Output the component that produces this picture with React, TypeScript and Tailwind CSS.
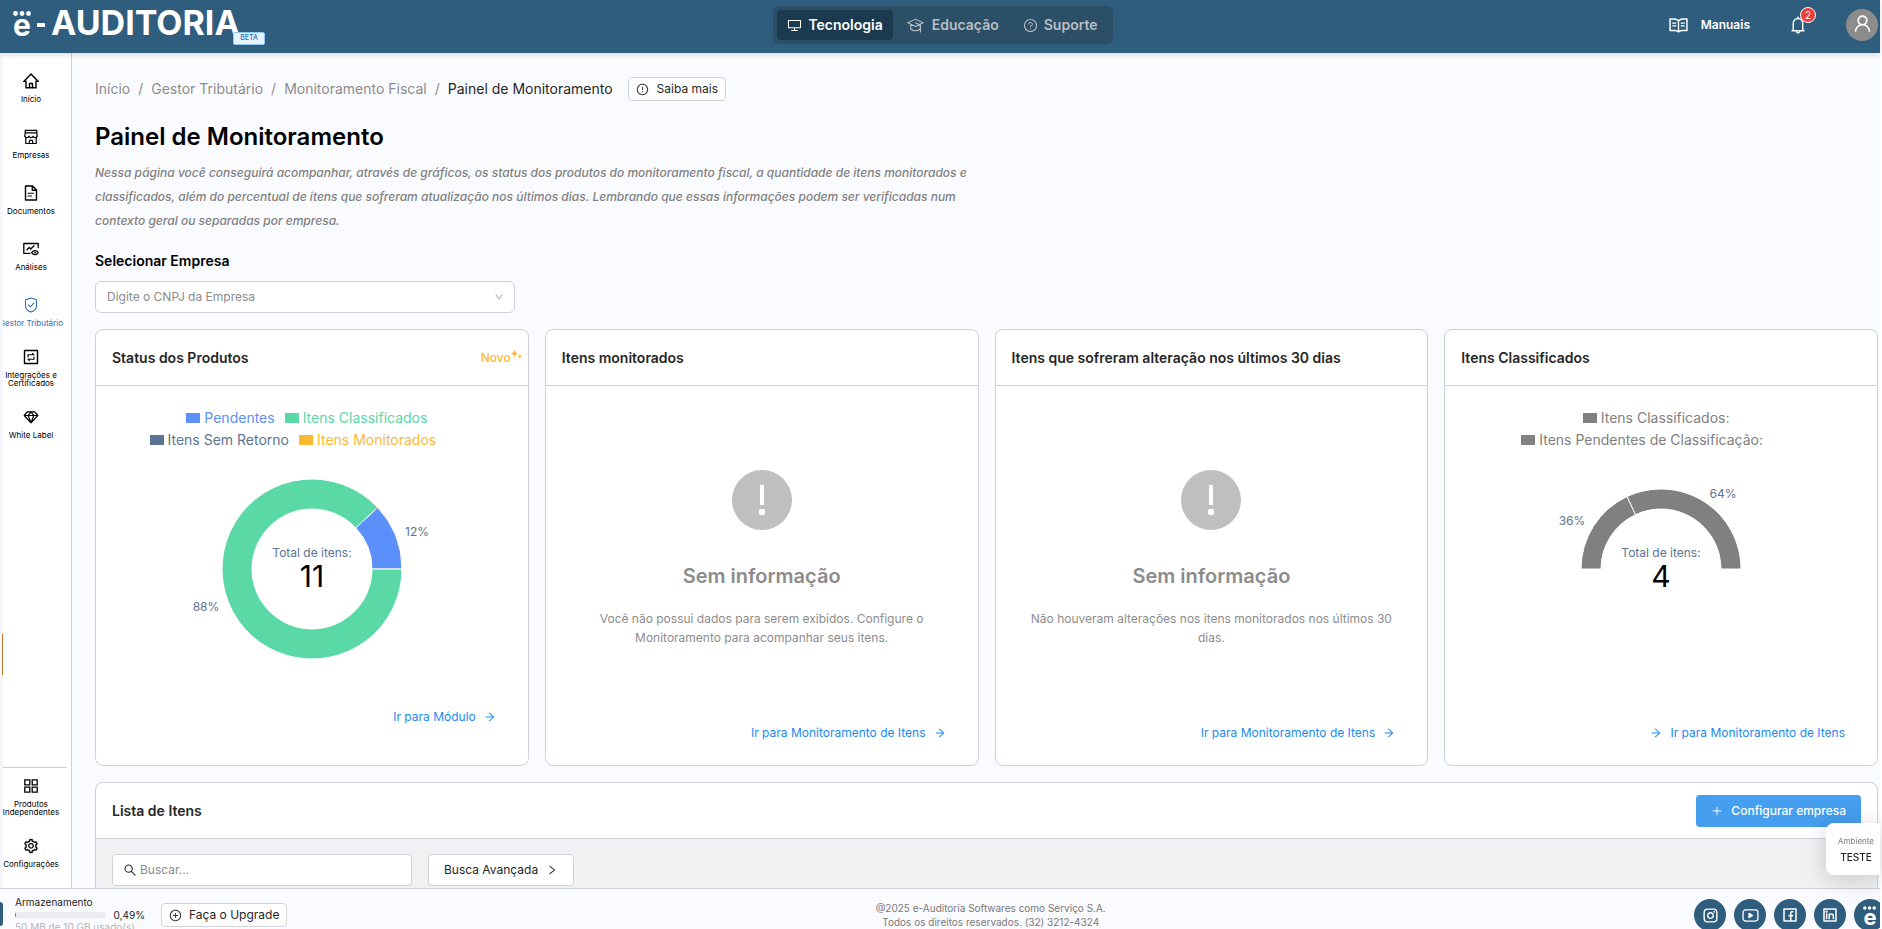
import type { ReactNode } from "react";
import {
  AiOutlineArrowRight,
  AiOutlineBell,
  AiOutlineDesktop,
  AiOutlineDown,
  AiOutlineExclamationCircle,
  AiOutlinePlus,
  AiOutlinePlusCircle,
  AiOutlineQuestionCircle,
  AiOutlineRead,
  AiOutlineRight,
  AiOutlineSetting,
  AiOutlineUser,
} from "react-icons/ai";
import { RiFacebookBoxLine, RiInstagramLine, RiLinkedinBoxLine } from "react-icons/ri";

/* ---------- icons ---------- */

function Stroke({ children, size = 16, width = 1.4 }: { children: ReactNode; size?: number; width?: number }) {
  return (
    <svg
      width={size}
      height={size}
      viewBox="0 0 16 16"
      fill="none"
      stroke="currentColor"
      strokeWidth={width}
      strokeLinejoin="round"
      strokeLinecap="round"
      aria-hidden="true"
    >
      {children}
    </svg>
  );
}

const HomeIcon = () => (
  <Stroke>
    <path d="M.8 8.4L8 1l7.2 7.4H13v6.400H3V8.400z" strokeLinejoin="miter" />
    <path d="M6.500 14.500v-4h3v4" />
  </Stroke>
);

const StoreIcon = () => (
  <Stroke width={1.2}>
    <path d="M2.200 1.400h11.600v2.400H2.200zM2.200 3.800L1.800 7.200M13.800 3.800l.4 3.400M2.800 8.500v6h10.400v-6" />
    <path d="M1.800 7.200c.6 2 3.600 2 4.100 0 .6 2 3.600 2 4.200 0 .5 2 3.500 2 4.100 0M6.300 14.500v-2.300c0-1.500 3.400-1.500 3.400 0v2.300" />
  </Stroke>
);

const DocumentIcon = () => (
  <Stroke>
    <path d="M2.500 1h7l4 4v10h-11zM9.300 1v4.200h4.200" />
    <path d="M5 8.300h5.500M5 11h3.500" strokeWidth="1.100" />
  </Stroke>
);

const AnalysisIcon = () => (
  <Stroke width={1.3}>
    <path d="M7 12.300H.8V2.500h14.400v4.200M4 8.800l2.200-2.300 1.500 1.500 3.300-3.300" />
    <path d="M8.600 11.600c1.700-2.700 5-2.700 6.700 0-1.700 2.700-5 2.700-6.700 0z" strokeWidth="1.100" />
    <circle cx="12" cy="11.600" r=".6" strokeWidth=".9" />
  </Stroke>
);

const ShieldIcon = () => (
  <Stroke width={1.1}>
    <path d="M8 1l5.500 1.800v6.100c0 3.200-2.600 5-5.500 6.200-2.900-1.200-5.500-3-5.500-6.200V2.800z" />
    <path d="M5.300 7.800l2 2 3.600-3.600" />
  </Stroke>
);

const IntegrationIcon = () => (
  <Stroke>
    <path d="M1.500 1.500h13v13h-13z" />
    <path d="M5 8V5.800h5.800M9.600 4.500l1.300 1.300M11 8v2.200H5.200M6.400 11.500l-1.300-1.300" strokeWidth="1.100" />
  </Stroke>
);

const DiamondIcon = () => (
  <Stroke width={1.2}>
    <path d="M4.200 2.800h7.600l3 3.700L8 13.800 1.200 6.500zM1.200 6.500h13.600M5.200 6.500L8 13.800l2.800-7.300L8 2.800z" />
  </Stroke>
);

const GridIcon = () => (
  <Stroke width={1.3}>
    <path d="M1.800 1.800h5v5h-5zM9.200 1.800h5v5h-5zM1.800 9.200h5v5h-5zM9.200 9.200h5v5h-5z" strokeLinejoin="miter" />
  </Stroke>
);

const GraduationIcon = () => (
  <Stroke size={17} width={1}>
    <path d="M8 2L.8 5.500 8 9l7.200-3.500zM3.500 7v4.300c2.500 2.300 6.500 2.300 9 0V7" />
    <path d="M8 5.500l4.700 2.200v6.500" />
  </Stroke>
);

const SearchIcon = () => (
  <Stroke size={12} width={1.500}>
    <circle cx="6.200" cy="6.200" r="4.800" />
    <path d="M9.800 9.800l5 5" />
  </Stroke>
);

const YoutubeIcon = () => (
  <Stroke size={17} width={1.200}>
    <rect x="1" y="2.800" width="14" height="10.400" rx="2.500" />
    <path d="M6.600 6l3.400 2-3.400 2z" fill="currentColor" />
  </Stroke>
);

const SparkIcon = () => (
  <svg width="11" height="10" viewBox="0 0 11 10" fill="currentColor" aria-hidden="true">
    <path d="M3.500 0l1.200 2.300 2.300 1.200-2.300 1.200L3.500 7 2.300 4.700 0 3.500l2.300-1.200zM8.800 4.200l.8 1.300 1.300.8-1.300.8-.8 1.300-.8-1.300-1.300-.8 1.300-.8z" />
  </svg>
);

/* The brand's "e" with three dots above it. */
function BrandE({ small = false }: { small?: boolean }) {
  return (
    <span className="flex flex-col items-center">
      <svg width={small ? 13 : 18} height={small ? 4 : 5} viewBox="0 0 18 5" fill="currentColor" aria-hidden="true">
        <circle cx="2.500" cy="2.500" r="2.400" />
        <circle cx="9" cy="2.500" r="2.400" />
        <circle cx="15.500" cy="2.500" r="2.400" />
      </svg>
      <span className={small ? "text-[22px] leading-[15px] font-bold" : "text-[30px] leading-[18px] font-bold"}>e</span>
    </span>
  );
}

/* ---------- sidebar ---------- */

function SideItem({ icon, label, active = false }: { icon: ReactNode; label: string; active?: boolean }) {
  return (
    <a
      href="#"
      className={
        active
          ? "flex w-[68px] flex-col items-center gap-1.5 text-center text-[8px] leading-2 text-[#2f6cb8]"
          : "flex w-[68px] flex-col items-center gap-1.5 text-center text-[8px] leading-2 text-black"
      }
    >
      {icon}
      <span>{label}</span>
    </a>
  );
}

function Sidebar() {
  return (
    <aside className="relative flex w-[72px] shrink-0 border-r border-[#cdd1d8] bg-white">
      <div className="w-[3px] shrink-0 bg-[#f5f6fb]" />
      <span className="absolute top-[581px] left-0.5 h-[41px] w-px bg-[#c47a2c]" />
      <nav className="flex min-w-0 flex-1 flex-col justify-between overflow-hidden">
        <div className="-ml-1.5 flex flex-col pt-5">
          <div className="flex flex-col gap-[26px]">
            <SideItem icon={<HomeIcon />} label="Início" />
            <SideItem icon={<StoreIcon />} label="Empresas" />
            <SideItem icon={<DocumentIcon />} label="Documentos" />
            <SideItem icon={<AnalysisIcon />} label="Análises" />
            <SideItem icon={<ShieldIcon />} label="Gestor Tributário" active />
          </div>
          <div className="flex flex-col gap-[22px] pt-[22px]">
            <SideItem icon={<IntegrationIcon />} label="Integrações e Certificados" />
            <SideItem icon={<DiamondIcon />} label="White Label" />
          </div>
        </div>
        <div className="mr-1 border-t border-[#cdd1d8] pt-[10px] pb-5">
          <div className="-ml-1.5 flex flex-col gap-[22px]">
            <SideItem icon={<GridIcon />} label="Produtos Independentes" />
            <SideItem icon={<AiOutlineSetting size={16} strokeWidth={20} />} label="Configurações" />
          </div>
        </div>
      </nav>
    </aside>
  );
}

/* ---------- cards ---------- */

function Card({ title, extra, children }: { title: string; extra?: ReactNode; children: ReactNode }) {
  return (
    <section className="flex min-w-0 flex-col rounded-lg border border-[#cdd1d8] bg-white">
      <header className="flex h-14 items-center justify-between border-b border-[#cdd1d8] pr-1.5 pl-4">
        <h2 className="text-sm font-semibold text-[#262626]">{title}</h2>
        {extra}
      </header>
      {children}
    </section>
  );
}

function CardLink({ children, arrowFirst = false }: { children: string; arrowFirst?: boolean }) {
  return (
    <a
      href="#"
      className={
        arrowFirst
          ? "flex flex-row-reverse items-center gap-2 self-end text-xs text-[#1e88f0]"
          : "flex items-center gap-2 self-end text-xs text-[#1e88f0]"
      }
    >
      <span>{children}</span>
      <AiOutlineArrowRight size={12} />
    </a>
  );
}

function EmptyCard({ title, text }: { title: string; text: string }) {
  return (
    <Card title={title}>
      <div className="flex flex-1 flex-col items-center px-8 pt-[84px] pb-6">
        <svg width="60" height="60" viewBox="0 0 60 60" aria-hidden="true">
          <circle cx="30" cy="30" r="30" fill="#bfbfbf" />
          <rect x="28" y="15" width="4" height="20" fill="#fff" />
          <circle cx="30" cy="42" r="3.200" fill="#fff" />
        </svg>
        <h3 className="mt-8 text-xl leading-7 font-semibold text-[#8c8c8c]">Sem informação</h3>
        <p className="mt-[19px] text-center text-xs leading-[19px] text-[#8c8c8c]">{text}</p>
        <div className="mt-auto flex self-stretch justify-end">
          <CardLink>Ir para Monitoramento de Itens</CardLink>
        </div>
      </div>
    </Card>
  );
}

function LegendItem({ swatch, text, label }: { swatch: string; text: string; label: string }) {
  return (
    <span className="mr-2.5 flex items-center gap-1">
      <span className={`h-2.5 w-3.5 ${swatch}`} />
      <span className={text}>{label}</span>
    </span>
  );
}

function ring(cx: number, cy: number, outer: number, inner: number, from: number, to: number) {
  const at = (r: number, deg: number) => {
    const a = (deg * Math.PI) / 180;
    return `${cx + r * Math.cos(a)} ${cy - r * Math.sin(a)}`;
  };
  const large = to - from > 180 ? 1 : 0;
  return `M${at(outer, from)}A${outer} ${outer} 0 ${large} 0 ${at(outer, to)}L${at(inner, to)}A${inner} ${inner} 0 ${large} 1 ${at(inner, from)}Z`;
}

function ChartTotal({ value }: { value: string }) {
  return (
    <>
      <text x="150" y="79" textAnchor="middle" className="fill-[#5b7491] text-xs">
        Total de itens:
      </text>
      <text x="150" y="109" textAnchor="middle" className="fill-black text-[30px]">
        {value}
      </text>
    </>
  );
}

function StatusChart() {
  return (
    <svg className="mt-[27px] self-center" width="300" height="182" viewBox="0 0 300 182" role="img" aria-label="Status dos Produtos">
      <path d={ring(150, 91, 90, 60, 0, 43.200)} fill="#5b8ff9" stroke="#fff" />
      <path d={ring(150, 91, 90, 60, 43.200, 360)} fill="#5ad8a6" stroke="#fff" />
      <text x="255" y="58" textAnchor="middle" className="fill-[#5b7491] text-xs">
        12%
      </text>
      <text x="44" y="133" textAnchor="middle" className="fill-[#5b7491] text-xs">
        88%
      </text>
      <ChartTotal value="11" />
    </svg>
  );
}

function ClassifiedChart() {
  return (
    <svg className="mt-[27px] self-center" width="300" height="182" viewBox="0 0 300 182" role="img" aria-label="Itens Classificados">
      <path d={ring(150, 91, 80, 60, 0, 115.200)} fill="#808080" stroke="#fff" />
      <path d={ring(150, 91, 80, 60, 115.200, 180)} fill="#808080" stroke="#fff" />
      <text x="212" y="20" textAnchor="middle" className="fill-[#5b7491] text-xs">
        64%
      </text>
      <text x="61" y="47" textAnchor="middle" className="fill-[#5b7491] text-xs">
        36%
      </text>
      <ChartTotal value="4" />
    </svg>
  );
}

/* ---------- page ---------- */

function TopBar() {
  return (
    <header className="relative z-10 grid h-[53px] shrink-0 grid-cols-[1fr_auto_1fr] items-start bg-[#2f5d7e] pl-1.5 text-white shadow-[0_2px_6px_rgba(0,0,0,0.14)]">
      <a href="#" aria-label="e-Auditoria" className="relative flex h-[53px] w-[259px] items-start gap-1.5 pt-[11px] pl-[7px]">
        <BrandE />
        <span className="mt-3 h-1 w-2 bg-white" />
        <span className="text-[34px] leading-6 font-bold">AUDITORIA</span>
        <span className="absolute top-8 right-0 flex h-[13px] w-8 items-center justify-center rounded-[2px] border border-[#91c8f5] bg-[#e6f4ff] text-[7px] font-medium text-[#1f6fc0]">
          BETA
        </span>
      </a>
      <nav className="mt-1.5 flex h-[38px] items-center rounded-md bg-[#2c4f68] p-1 pr-[15px] text-sm font-semibold text-[#b9bdc2]">
        <a href="#" className="flex h-[30px] items-center gap-1.5 rounded bg-[#1b3a4f] px-[10px] text-white">
          <AiOutlineDesktop size={15} />
          Tecnologia
        </a>
        <a href="#" className="ml-3.5 flex items-center gap-2">
          <GraduationIcon />
          Educação
        </a>
        <a href="#" className="ml-6 flex items-center gap-1.5">
          <AiOutlineQuestionCircle size={15} />
          Suporte
        </a>
      </nav>
      <div className="flex h-[50px] items-center justify-end pr-0.5">
        <a href="#" className="mr-[38px] flex items-center gap-3 text-xs font-semibold">
          <AiOutlineRead size={21} />
          Manuais
        </a>
        <button type="button" aria-label="Notificações" className="relative mr-[38px]">
          <AiOutlineBell size={20} />
          <span className="absolute -top-2 -right-2 flex size-4 items-center justify-center rounded-full border border-white bg-[#ee3b3b] text-[10px]">
            2
          </span>
        </button>
        <button type="button" aria-label="Perfil" className="flex size-8 items-center justify-center rounded-full bg-[#8c8c8c]">
          <AiOutlineUser size={21} className="mb-1" />
        </button>
      </div>
    </header>
  );
}

function Breadcrumb() {
  return (
    <div className="flex items-center gap-[15px]">
      <nav aria-label="Breadcrumb" className="flex gap-2 text-sm text-[#8c8c8c]">
        <a href="#">Início</a>
        <span>/</span>
        <a href="#">Gestor Tributário</a>
        <span>/</span>
        <a href="#">Monitoramento Fiscal</a>
        <span>/</span>
        <span className="text-[#262626]">Painel de Monitoramento</span>
      </nav>
      <button type="button" className="flex h-6 items-center gap-2 rounded border border-[#d0d4da] bg-white px-[7px] text-xs text-[#262626]">
        <AiOutlineExclamationCircle size={13} />
        Saiba mais
      </button>
    </div>
  );
}

function Footer() {
  return (
    <footer className="relative flex h-[41px] shrink-0 items-start justify-between overflow-hidden border-t border-[#cdd1d8] bg-[#fafbff]">
      <span className="absolute top-[13px] left-0 h-6 w-[3px] rounded-r bg-[#2f5d7e]" />
      <div className="flex pl-[15px]">
        <div className="w-[130px] pt-1.5 text-[10px] text-[#262626]">
          <p className="leading-[14px]">Armazenamento</p>
          <div className="flex items-center gap-2 leading-3">
            <div className="h-1.5 flex-1 overflow-hidden rounded-full bg-[#ebedf0]">
              <div className="h-full w-px bg-[#1e88f0]" />
            </div>
            <span>0,49%</span>
          </div>
          <p className="leading-3 text-[#b5b5b5]">50 MB de 10 GB usado(s)</p>
        </div>
        <button type="button" className="mt-3.5 ml-4 flex h-6 items-center gap-[7px] rounded border border-[#d0d4da] bg-white px-[7px] text-xs text-[#262626]">
          <AiOutlinePlusCircle size={13} />
          Faça o Upgrade
        </button>
      </div>
      <div className="pt-3 text-center text-[10px] leading-[14px] text-[#7a7a7a]">
        <p>@2025 e-Auditoria Softwares como Serviço S.A.</p>
        <p>Todos os direitos reservados. (32) 3212-4324</p>
      </div>
      <div className="-mr-1.5 flex gap-2 pt-[10px] text-white">
        <a href="#" aria-label="Instagram" className="flex size-8 items-center justify-center rounded-full bg-[#2f5d7e]">
          <RiInstagramLine size={17} />
        </a>
        <a href="#" aria-label="YouTube" className="flex size-8 items-center justify-center rounded-full bg-[#2f5d7e]">
          <YoutubeIcon />
        </a>
        <a href="#" aria-label="Facebook" className="flex size-8 items-center justify-center rounded-full bg-[#2f5d7e]">
          <RiFacebookBoxLine size={18} />
        </a>
        <a href="#" aria-label="LinkedIn" className="flex size-8 items-center justify-center rounded-full bg-[#2f5d7e]">
          <RiLinkedinBoxLine size={18} />
        </a>
        <a href="#" aria-label="e-Auditoria" className="flex size-8 items-center justify-center rounded-full bg-[#2f5d7e]">
          <BrandE small />
        </a>
      </div>
    </footer>
  );
}

export default function App() {
  return (
    <div className="flex h-screen flex-col overflow-hidden bg-white pr-0.5 font-['Inter',sans-serif]">
      <TopBar />
      <div className="flex min-h-0 flex-1">
        <Sidebar />
        <main className="min-w-0 flex-1 overflow-hidden bg-[#fafbff] pt-6 pr-0.5 pl-[23px]">
          <Breadcrumb />
          <h1 className="mt-5 text-2xl leading-8 font-semibold text-black">Painel de Monitoramento</h1>
          <p className="mt-2 max-w-[900px] text-xs leading-6 font-medium text-[#808080] italic">
            Nessa página você conseguirá acompanhar, através de gráficos, os status dos produtos do monitoramento fiscal, a
            quantidade de itens monitorados e classificados, além do percentual de itens que sofreram atualização nos
            últimos dias. Lembrando que essas informações podem ser verificadas num contexto geral ou separadas por
            empresa.
          </p>
          <label htmlFor="company" className="mt-[18px] block text-sm font-semibold text-black">
            Selecionar Empresa
          </label>
          <div className="relative mt-2.5 w-[420px]">
            <select
              id="company"
              className="h-8 w-full appearance-none rounded-md border border-[#cdd1d8] bg-white px-[11px] text-xs text-[#8c8c8c]"
            >
              <option>Digite o CNPJ da Empresa</option>
            </select>
            <AiOutlineDown size={10} className="pointer-events-none absolute top-[11px] right-[11px] text-[#8c8c8c]" />
          </div>

          <div className="mt-4 grid h-[437px] grid-cols-4 gap-4">
            <Card
              title="Status dos Produtos"
              extra={
                <span className="flex items-start text-xs font-medium text-[#fbb931]">
                  Novo
                  <SparkIcon />
                </span>
              }
            >
              <div className="flex flex-1 flex-col px-8 pt-[21px] pb-10">
                <ul className="flex flex-col items-center text-sm leading-[22px]">
                  <li className="flex">
                    <LegendItem swatch="bg-[#5b8ff9]" text="text-[#5b8ff9]" label="Pendentes" />
                    <LegendItem swatch="bg-[#5ad8a6]" text="text-[#5ad8a6]" label="Itens Classificados" />
                  </li>
                  <li className="flex pr-7">
                    <LegendItem swatch="bg-[#5b7491]" text="text-[#5b7491]" label="Itens Sem Retorno" />
                    <LegendItem swatch="bg-[#fbb931]" text="text-[#fbb931]" label="Itens Monitorados" />
                  </li>
                </ul>
                <StatusChart />
                <div className="mt-auto flex justify-end">
                  <CardLink>Ir para Módulo</CardLink>
                </div>
              </div>
            </Card>

            <EmptyCard
              title="Itens monitorados"
              text="Você não possui dados para serem exibidos. Configure o Monitoramento para acompanhar seus itens."
            />
            <EmptyCard
              title="Itens que sofreram alteração nos últimos 30 dias"
              text="Não houveram alterações nos itens monitorados nos últimos 30 dias."
            />

            <Card title="Itens Classificados">
              <div className="flex flex-1 flex-col px-8 pt-[21px] pb-6">
                <ul className="flex flex-col items-center text-sm leading-[22px]">
                  <li>
                    <LegendItem swatch="bg-[#808080]" text="text-[#808080]" label="Itens Classificados:" />
                  </li>
                  <li className="pr-7">
                    <LegendItem swatch="bg-[#808080]" text="text-[#808080]" label="Itens Pendentes de Classificação:" />
                  </li>
                </ul>
                <ClassifiedChart />
                <div className="mt-auto flex justify-end">
                  <CardLink arrowFirst>Ir para Monitoramento de Itens</CardLink>
                </div>
              </div>
            </Card>
          </div>

          <section className="mt-4 overflow-hidden rounded-t-lg border border-b-0 border-[#cdd1d8] bg-white">
            <header className="flex h-14 items-center justify-between border-b border-[#cdd1d8] px-4">
              <h2 className="text-sm font-semibold text-[#262626]">Lista de Itens</h2>
              <button type="button" className="flex h-8 items-center gap-2 rounded bg-[#459eee] px-[15px] text-xs font-medium text-white">
                <AiOutlinePlus size={12} />
                Configurar empresa
              </button>
            </header>
            <div className="flex gap-4 bg-[#f0f1f3] px-4 pt-[15px] pb-24">
              <label className="flex h-8 w-[300px] items-center gap-1 rounded border border-[#d0d4da] bg-white px-[11px] text-[#262626]">
                <SearchIcon />
                <input
                  type="text"
                  aria-label="Buscar"
                  placeholder="Buscar..."
                  className="min-w-0 flex-1 bg-transparent text-xs outline-none placeholder:text-[#8c8c8c]"
                />
              </label>
              <button type="button" className="flex h-8 items-center gap-2 rounded border border-[#d0d4da] bg-white px-[15px] text-xs text-[#262626]">
                Busca Avançada
                <AiOutlineRight size={12} />
              </button>
            </div>
          </section>
        </main>
      </div>
      <Footer />
      <aside className="fixed right-0.5 bottom-[54px] flex h-[52px] w-[54px] flex-col items-center justify-center rounded-l-lg bg-white pl-1.5 shadow-[0_4px_24px_rgba(0,0,0,0.18)]">
        <span className="text-[8px] leading-3 text-[#7a7a7a]">Ambiente</span>
        <span className="mt-1 text-[10px] leading-3 font-medium text-[#262626]">TESTE</span>
      </aside>
    </div>
  );
}
